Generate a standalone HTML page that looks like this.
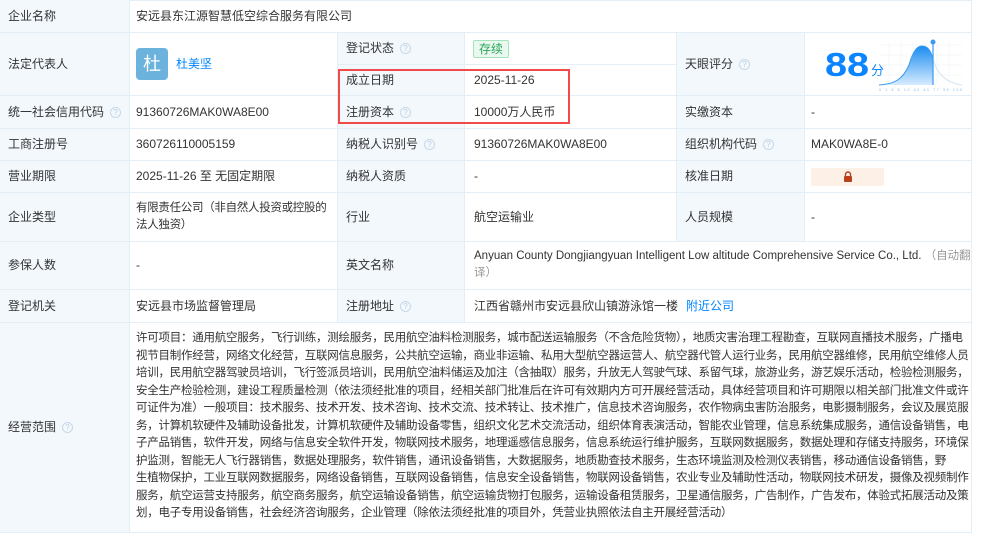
<!DOCTYPE html>
<html><head><meta charset="utf-8"><style>
*{margin:0;padding:0;box-sizing:border-box}
body{width:981px;height:521px;overflow:hidden;background:#fff;font-family:"Liberation Sans","Noto Sans CJK SC",sans-serif;font-size:12px;color:#333;position:relative}
.c{position:absolute;border-right:1px solid #e4eef6;border-bottom:1px solid #e4eef6;padding-left:8px;display:flex;align-items:center;line-height:17px}
.l{background:#f3f8fd}
.v{padding-left:6px}
.q{display:inline-block;width:11px;height:11px;border:1px solid #c6d8e8;border-radius:50%;color:#b8cde0;font-size:8px;line-height:9px;text-align:center;margin-left:6px}
a{color:#0084ff;text-decoration:none}
.scope{position:absolute;left:136px;top:330px;font-size:11.5px;letter-spacing:-0.25px;line-height:17.5px;white-space:nowrap}
</style></head><body>
<div style="position:absolute;left:0;top:0;width:972px;height:521px;border-top:1px solid #e4eef6;border-left:1px solid #e4eef6"></div>
<div class="c l" style="left:0;top:0;width:130px;height:33px">企业名称</div>
<div class="c v" style="left:130px;top:0;width:842px;height:33px">安远县东江源智慧低空综合服务有限公司</div>
<div class="c l" style="left:0;top:33px;width:130px;height:63px">法定代表人</div>
<div class="c v" style="left:130px;top:33px;width:208px;height:63px"><span style="display:inline-block;width:32px;height:32px;background:#6bb3dc;border-radius:4px;color:#fff;font-size:18px;line-height:32px;text-align:center">杜</span><a style="margin-left:8px">杜美坚</a></div>
<div class="c l" style="left:338px;top:33px;width:127px;height:32px">登记状态<span class="q">?</span></div>
<div class="c v" style="left:465px;top:33px;width:212px;height:32px"><span style="margin-left:2px;border:1px solid #a6e3bd;background:#e9f9ef;color:#2aa35a;padding:0 5px;line-height:16px;border-radius:2px">存续</span></div>
<div class="c l" style="left:338px;top:65px;width:127px;height:31px">成立日期</div>
<div class="c v" style="left:465px;top:65px;width:212px;height:31px;padding-left:9px">2025-11-26</div>
<div class="c l" style="left:677px;top:33px;width:128px;height:63px">天眼评分<span class="q">?</span></div>
<div class="c v" style="left:805px;top:33px;width:167px;height:63px">
<span style="font-size:33px;font-weight:bold;color:#0a84ff;margin-left:14px;display:inline-block;transform:scaleX(1.2);transform-origin:left;width:40px">88</span><span style="color:#0a84ff;font-size:13px;margin-left:6px;margin-top:12px">分</span>
<svg style="position:absolute;left:72px;top:6px" width="90" height="54" viewBox="0 0 90 54">
<defs><linearGradient id="g" x1="0" y1="0" x2="0" y2="1"><stop offset="0" stop-color="#1a8cf0"/><stop offset="1" stop-color="#d6ecff"/></linearGradient></defs>
<g stroke="#eef2f6" stroke-width="0.6"><line x1="2" y1="6" x2="85" y2="6"/><line x1="2" y1="16" x2="85" y2="16"/><line x1="2" y1="26" x2="85" y2="26"/><line x1="2" y1="36" x2="85" y2="36"/><line x1="12" y1="3" x2="12" y2="46"/><line x1="24" y1="3" x2="24" y2="46"/><line x1="36" y1="3" x2="36" y2="46"/><line x1="48" y1="3" x2="48" y2="46"/><line x1="60" y1="3" x2="60" y2="46"/><line x1="72" y1="3" x2="72" y2="46"/></g>
<path d="M2 46 C18 45 26 40 32 26 C36 12 40 7 45 7 C51 7 54 12 56 20 L56 46 Z" fill="url(#g)"/>
<path d="M56 20 C60 36 70 44 85 46" fill="none" stroke="#d4e4f2" stroke-width="1"/>
<path d="M2 46 C18 45 26 40 32 26 C36 12 40 7 45 7 C51 7 54 12 56 20" fill="none" stroke="#3a9af0" stroke-width="1"/>
<line x1="56" y1="4" x2="56" y2="46" stroke="#3a9af0" stroke-width="1.2"/><circle cx="56" cy="3" r="2.5" fill="#3a9af0"/>
<text x="2" y="52" font-size="3.5" fill="#7fb6e6" font-family="Liberation Sans" textLength="83">0 1 3 5 10 40 61 77 99 100</text>
</svg></div>
<div class="c l" style="left:0;top:96px;width:130px;height:33px">统一社会信用代码<span class="q">?</span></div>
<div class="c v" style="left:130px;top:96px;width:208px;height:33px">91360726MAK0WA8E00</div>
<div class="c l" style="left:338px;top:96px;width:127px;height:33px">注册资本<span class="q">?</span></div>
<div class="c v" style="left:465px;top:96px;width:212px;height:33px;padding-left:9px">10000万人民币</div>
<div class="c l" style="left:677px;top:96px;width:128px;height:33px">实缴资本</div>
<div class="c v" style="left:805px;top:96px;width:167px;height:33px">-</div>
<div class="c l" style="left:0;top:129px;width:130px;height:32px">工商注册号</div>
<div class="c v" style="left:130px;top:129px;width:208px;height:32px">360726110005159</div>
<div class="c l" style="left:338px;top:129px;width:127px;height:32px">纳税人识别号<span class="q">?</span></div>
<div class="c v" style="left:465px;top:129px;width:212px;height:32px;padding-left:9px">91360726MAK0WA8E00</div>
<div class="c l" style="left:677px;top:129px;width:128px;height:32px">组织机构代码<span class="q">?</span></div>
<div class="c v" style="left:805px;top:129px;width:167px;height:32px">MAK0WA8E-0</div>
<div class="c l" style="left:0;top:161px;width:130px;height:32px">营业期限</div>
<div class="c v" style="left:130px;top:161px;width:208px;height:32px">2025-11-26 至 无固定期限</div>
<div class="c l" style="left:338px;top:161px;width:127px;height:32px">纳税人资质</div>
<div class="c v" style="left:465px;top:161px;width:212px;height:32px;padding-left:9px">-</div>
<div class="c l" style="left:677px;top:161px;width:128px;height:32px">核准日期</div>
<div class="c v" style="left:805px;top:161px;width:167px;height:32px"><span style="display:flex;align-items:center;justify-content:center;width:73px;height:18px;background:#fdf0e6;border-radius:2px"><svg width="10" height="11" viewBox="0 0 10 11"><path d="M2.5 5V3.5a2.5 2.5 0 0 1 5 0V5" fill="none" stroke="#b8401c" stroke-width="1.4"/><rect x="1" y="5" width="8" height="6" rx="1" fill="#b8401c"/></svg></span></div>
<div class="c l" style="left:0;top:193px;width:130px;height:49px">企业类型</div>
<div class="c v" style="left:130px;top:193px;width:208px;height:49px;white-space:nowrap;font-size:11.5px;letter-spacing:-0.3px">有限责任公司（非自然人投资或控股的<br>法人独资）</div>
<div class="c l" style="left:338px;top:193px;width:127px;height:49px">行业</div>
<div class="c v" style="left:465px;top:193px;width:212px;height:49px;padding-left:9px">航空运输业</div>
<div class="c l" style="left:677px;top:193px;width:128px;height:49px">人员规模</div>
<div class="c v" style="left:805px;top:193px;width:167px;height:49px">-</div>
<div class="c l" style="left:0;top:242px;width:130px;height:48px">参保人数</div>
<div class="c v" style="left:130px;top:242px;width:208px;height:48px">-</div>
<div class="c l" style="left:338px;top:242px;width:127px;height:48px">英文名称</div>
<div class="c v" style="left:465px;top:242px;width:507px;height:48px;padding-left:9px;display:block;padding-top:6px;font-size:11.5px">Anyuan County Dongjiangyuan Intelligent Low altitude Comprehensive Service Co., Ltd. <span style="color:#999">（自动翻<br>译）</span></div>
<div class="c l" style="left:0;top:290px;width:130px;height:33px">登记机关</div>
<div class="c v" style="left:130px;top:290px;width:208px;height:33px">安远县市场监督管理局</div>
<div class="c l" style="left:338px;top:290px;width:127px;height:33px">注册地址<span class="q">?</span></div>
<div class="c v" style="left:465px;top:290px;width:507px;height:33px;padding-left:9px">江西省赣州市安远县欣山镇游泳馆一楼<a style="margin-left:8px">附近公司</a></div>
<div class="c l" style="left:0;top:323px;width:130px;height:210px">经营范围<span class="q">?</span></div>
<div class="c v" style="left:130px;top:323px;width:842px;height:210px"></div>
<div class="scope">许可项目：通用航空服务，飞行训练，测绘服务，民用航空油料检测服务，城市配送运输服务（不含危险货物），地质灾害治理工程勘查，互联网直播技术服务，广播电<br>视节目制作经营，网络文化经营，互联网信息服务，公共航空运输，商业非运输、私用大型航空器运营人、航空器代管人运行业务，民用航空器维修，民用航空维修人员<br>培训，民用航空器驾驶员培训，飞行签派员培训，民用航空油料储运及加注（含抽取）服务，升放无人驾驶气球、系留气球，旅游业务，游艺娱乐活动，检验检测服务，<br>安全生产检验检测，建设工程质量检测（依法须经批准的项目，经相关部门批准后在许可有效期内方可开展经营活动，具体经营项目和许可期限以相关部门批准文件或许<br>可证件为准）一般项目：技术服务、技术开发、技术咨询、技术交流、技术转让、技术推广，信息技术咨询服务，农作物病虫害防治服务，电影摄制服务，会议及展览服<br>务，计算机软硬件及辅助设备批发，计算机软硬件及辅助设备零售，组织文化艺术交流活动，组织体育表演活动，智能农业管理，信息系统集成服务，通信设备销售，电<br>子产品销售，软件开发，网络与信息安全软件开发，物联网技术服务，地理遥感信息服务，信息系统运行维护服务，互联网数据服务，数据处理和存储支持服务，环境保<br>护监测，智能无人飞行器销售，数据处理服务，软件销售，通讯设备销售，大数据服务，地质勘查技术服务，生态环境监测及检测仪表销售，移动通信设备销售，野<br>生植物保护，工业互联网数据服务，网络设备销售，互联网设备销售，信息安全设备销售，物联网设备销售，农业专业及辅助性活动，物联网技术研发，摄像及视频制作<br>服务，航空运营支持服务，航空商务服务，航空运输设备销售，航空运输货物打包服务，运输设备租赁服务，卫星通信服务，广告制作，广告发布，体验式拓展活动及策<br>划，电子专用设备销售，社会经济咨询服务，企业管理（除依法须经批准的项目外，凭营业执照依法自主开展经营活动）</div>
<div style="position:absolute;left:338px;top:69px;width:232px;height:55px;border:2px solid #f04a4a"></div>
</body></html>
